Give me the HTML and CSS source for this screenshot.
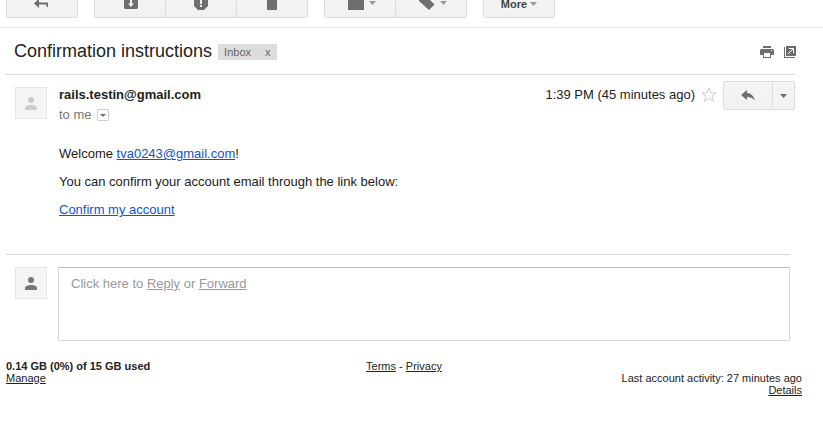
FILE: index.html
```html
<!DOCTYPE html>
<html lang="en">
<head>
<meta charset="utf-8">
<title>Confirmation instructions</title>
<link rel="stylesheet" href="styles.css">
</head>
<body>
<nav class="toolbar" aria-label="Message actions">
  <div class="group">
    <button class="btn" aria-label="Back to inbox"><svg width="22" height="21"><path d="M3 10.500 8 5.500V9.500H17V14H15.500V11.500H8V15Z"/></svg></button>
  </div>
  <div class="group">
    <button class="btn" aria-label="Archive"><svg width="22" height="21"><path fill-rule="evenodd" d="M5 4 7 2H17L19 4V15L18 16H6L5 15ZM11 7V10.500H9L12 14 15 10.500H13V7Z"/></svg></button>
    <button class="btn" aria-label="Report spam"><svg width="22" height="21"><path fill-rule="evenodd" d="M8 3H14L18 7V13L14 17H8L4 13V7ZM10 5V11H12V5ZM10 12V14H12V12Z"/></svg></button>
    <button class="btn" aria-label="Delete"><svg width="22" height="21"><path d="M5 3H8V2H14V3H17V5H5ZM6 6H16V17H6Z"/></svg></button>
  </div>
  <div class="group">
    <button class="btn" aria-label="Move to"><svg width="28" height="21"><path d="M2 4H8L10 6H18V17H2Z"/><path class="arrow" d="M23 8H30L26.500 12Z"/></svg></button>
    <button class="btn" aria-label="Labels"><svg width="28" height="21"><path d="M2 3H9L17.500 11.500 12 17 2 8Z"/><path class="arrow" d="M23 8H30L26.500 12Z"/></svg></button>
  </div>
  <div class="group">
    <button class="btn more">More <svg width="7" height="4"><path class="arrow" d="M0 0H7L3.500 4Z"/></svg></button>
  </div>
</nav>
<main>
  <header class="subject">
    <h1>Confirmation instructions</h1>
    <span class="label">Inbox <button aria-label="Remove label">x</button></span>
    <div class="tools">
      <button aria-label="Print all"><svg width="14" height="12"><path d="M3 0H11V2H3ZM1 3H13L14 4V9H11V12H3V9H0V4Z"/><path class="paper" d="M4 7H10V11H4ZM11 4H12V5H11Z"/></svg></button>
      <button aria-label="In new window"><svg width="12" height="12"><path d="M0 1H1V11H11V12H0ZM2 0H12V10H2Z"/><path class="line" d="M4 8 9 3M5 2.500H9.500V7"/></svg></button>
    </div>
  </header>
  <article class="message">
    <div class="avatar"><svg width="12" height="13"><circle cx="6" cy="3" r="3"/><path d="M0 13V11C0 9 3 8 6 8S12 9 12 11V13Z"/></svg></div>
    <div class="content">
      <div class="meta">
        <div class="from">
          <strong>rails.testin@gmail.com</strong>
          <div class="to">to me <button aria-label="Show details"><svg width="6" height="3"><path d="M0 0H6L3 3Z"/></svg></button></div>
        </div>
        <time>1:39 PM (45 minutes ago)</time>
        <button class="star" aria-label="Star"><svg width="16" height="15"><path d="M8 1 9.800 5.800 15 6 11 9.200 12.500 14.300 8 11.400 3.500 14.300 5 9.200 1 6 6.200 5.800Z"/></svg></button>
        <div class="reply-group">
          <button class="btn reply" aria-label="Reply"><svg width="14" height="11"><path d="M0 5 6 0V3C10 3 13 6 14 11C12 8 10 7 6 7V10Z"/></svg></button>
          <button class="btn drop" aria-label="More"><svg width="7" height="4"><path d="M0 0H7L3.500 4Z"/></svg></button>
        </div>
      </div>
      <div class="body">
        <p>Welcome <a href="#">tva0243@gmail.com</a>!</p>
        <p>You can confirm your account email through the link below:</p>
        <p><a href="#">Confirm my account</a></p>
      </div>
    </div>
  </article>
  <section class="answer">
    <div class="avatar own"><svg width="12" height="13"><circle cx="6" cy="3" r="3"/><path d="M0 13V11C0 9 3 8 6 8S12 9 12 11V13Z"/></svg></div>
    <div class="box">Click here to <a href="#">Reply</a> or <a href="#">Forward</a></div>
  </section>
</main>
<footer>
  <div><strong>0.14 GB (0%) of 15 GB used</strong><br><a href="#">Manage</a></div>
  <div class="terms"><a href="#">Terms</a> - <a href="#">Privacy</a></div>
  <div class="activity">Last account activity: 27 minutes ago<br><a href="#">Details</a></div>
</footer>
</body>
</html>
```
FILE: styles.css
```css
* { box-sizing: border-box; }
body {
  margin: 0;
  background: #fff;
  color: #222;
  font: 13px/18px "Liberation Sans", Arial, sans-serif;
}
button {
  margin: 0;
  padding: 0;
  border: 0;
  background: none;
  color: inherit;
  font: inherit;
}
svg { display: block; fill: #6e6e6e; overflow: visible; }
h1, p { margin: 0; }

/* The toolbar is scrolled partly out of view: only the button bottoms show. */
.toolbar {
  display: flex;
  align-items: flex-end;
  gap: 16px;
  height: 28px;
  padding: 0 6px 9px;
  border-bottom: 1px solid #e5e5e5;
  overflow: hidden;
}
.group, .reply-group { display: flex; }
.btn {
  display: flex;
  align-items: center;
  justify-content: center;
  width: 72px;
  height: 29px;
  border: 1px solid #dcdcdc;
  background: linear-gradient(#f5f5f5, #f1f1f1);
}
.btn + .btn { margin-left: -1px; }
.btn:first-child { border-radius: 2px 0 0 2px; }
.btn:last-child { border-radius: 0 2px 2px 0; }
.btn:only-child { border-radius: 2px; }
.more { gap: 3px; color: #444; font-size: 11px; font-weight: bold; }
.arrow { fill: #999; }

.subject {
  display: flex;
  align-items: center;
  height: 47px;
  margin: 0 27px 0 6px;
  padding-left: 8px;
  background: linear-gradient(#d8d8d8, #d8d8d8) left bottom / calc(100% - 1px) 1px no-repeat;
}
h1 { padding-bottom: 2px; font-size: 18px; font-weight: normal; line-height: 24px; }
.label {
  display: flex;
  gap: 14px;
  margin-left: 6px;
  padding: 0 6px;
  background: #ddd;
  color: #666;
  font-size: 11px;
  line-height: 16px;
}
.tools { display: flex; gap: 10px; margin-left: auto; padding-top: 1px; }
.paper { fill: #fff; }
.line { fill: none; stroke: #fff; }

.message, .answer {
  display: flex;
  gap: 12px;
  margin-left: 15px;
}
.message { min-height: 179px; padding-top: 6px; }
.avatar {
  display: flex;
  flex: none;
  align-items: center;
  justify-content: center;
  width: 32px;
  height: 32px;
  border: 1px solid #e5e5e5;
  background: #f5f5f5;
}
.message .avatar { margin-top: 6px; }
.avatar svg { fill: #ccc; }
.avatar.own svg { fill: #777; }
.content { flex: 1; }
.meta { display: flex; align-items: flex-start; margin-right: 28px; }
.from { flex: 1; padding-top: 4px; line-height: 20px; }
.to { display: flex; align-items: center; gap: 5px; color: #777; }
.to button {
  display: flex;
  align-items: center;
  justify-content: center;
  width: 12px;
  height: 12px;
  border: 1px solid #ccc;
  border-radius: 1px;
}
time { padding-top: 4px; line-height: 20px; }
.star { margin: 6px 6px 0; }
.star svg { fill: none; stroke: #ccc; }
.reply { width: 50px; }
.drop { width: 23px; }
.body { padding-top: 20px; }
.body p { margin-bottom: 10px; }
.body a { color: #15c; }

.answer {
  position: relative;
  margin-right: 33px;
  padding-top: 13px;
}
.answer::before {
  content: "";
  position: absolute;
  top: 0;
  right: 0;
  left: -9px;
  border-top: 1px solid #d8d8d8;
}
.box {
  flex: 1;
  min-height: 74px;
  margin-left: -1px;
  padding: 7px 12px;
  border: 1px solid #d8d8d8;
  border-top-color: #c0c0c0;
  color: #999;
}
.box a { color: inherit; }

footer {
  display: grid;
  grid-template-columns: 1fr auto 1fr;
  margin: 19px 21px 0 6px;
  font-size: 11px;
  line-height: 12px;
}
footer a { color: #222; }
.activity { padding-top: 12px; text-align: right; }
```
